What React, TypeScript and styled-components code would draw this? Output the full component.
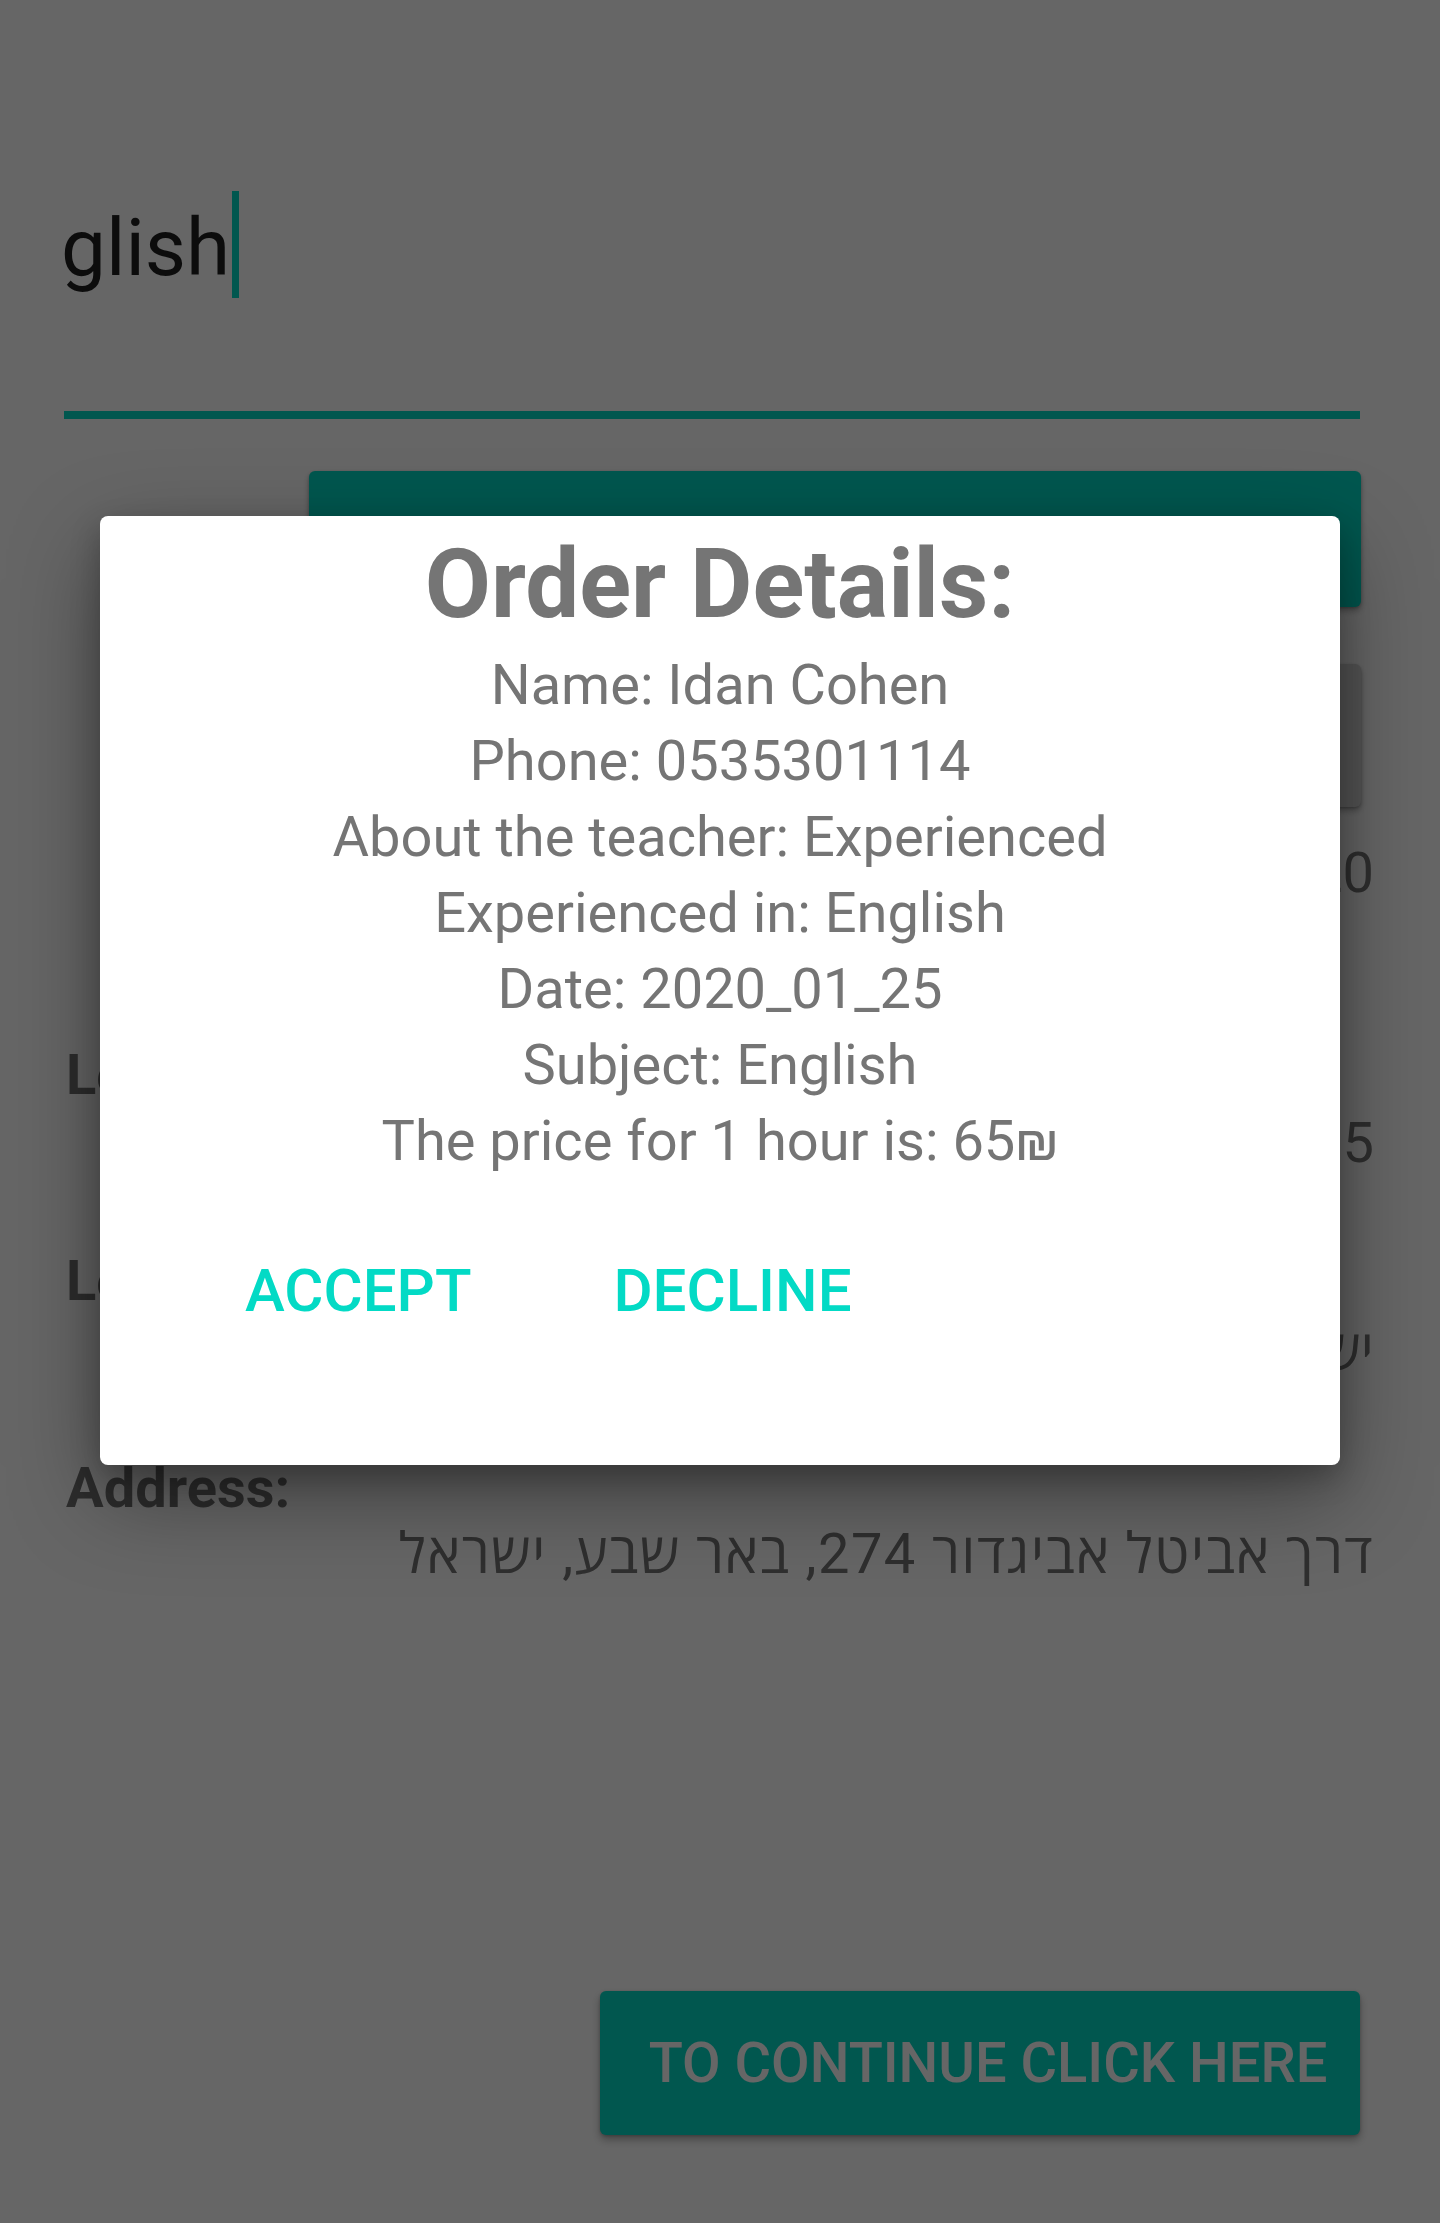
import React from "react";
import styled, { createGlobalStyle } from "styled-components";

const GlobalStyle = createGlobalStyle`
  html, body {
    margin: 0;
    padding: 0;
  }
  body {
    font-family: Roboto, "Open Sans", "DejaVu Sans", sans-serif;
    background: #ffffff;
  }
  * {
    box-sizing: border-box;
  }
`;

const ACCENT = "#03dac5";

const Screen = styled.div`
  position: relative;
  width: 1440px;
  height: 2223px;
  overflow: hidden;
  background: #ffffff;
`;

const Page = styled.div`
  display: flex;
  flex-direction: column;
  padding: 0 80px 0 64px;
`;

const EditField = styled.div`
  margin-top: 191px;
  height: 228px;
  border-bottom: 8px solid ${ACCENT};
  display: flex;
  align-items: flex-start;
`;

const EditText = styled.span`
  font-size: 80px;
  line-height: 103px;
  padding-top: 6px;
  margin-left: -3px;
  color: #1f1f1f;
`;

const Cursor = styled.span`
  width: 7px;
  height: 107px;
  margin-left: 2px;
  background: ${ACCENT};
`;

const RaisedButton = styled.div<{ $tone: "accent" | "plain"; $top: number; $height: number }>`
  margin: ${(p) => p.$top}px -1px 0 245px;
  height: ${(p) => p.$height}px;
  border-radius: 6px;
  background: ${(p) => (p.$tone === "accent" ? ACCENT : "#d6d6d6")};
  box-shadow: 0 4px 6px rgba(0, 0, 0, 0.28), 0 1px 3px rgba(0, 0, 0, 0.2);
`;

const Label = styled.div<{ $top: number }>`
  margin-top: ${(p) => p.$top}px;
  margin-left: 2px;
  font-size: 56px;
  line-height: 68px;
  font-weight: 700;
  color: #727272;
  white-space: nowrap;
`;

const Value = styled.div<{ $top: number; $spacing?: number }>`
  margin-top: ${(p) => p.$top}px;
  margin-right: -14px;
  font-size: 56px;
  line-height: 68px;
  letter-spacing: ${(p) => p.$spacing ?? 0}px;
  color: #757575;
  text-align: right;
  white-space: nowrap;
`;

const ContinueButton = styled.button`
  margin-top: 403px;
  align-self: flex-end;
  width: 760px;
  height: 144px;
  border: none;
  border-radius: 6px;
  padding: 0 0 0 16px;
  background: ${ACCENT};
  color: #ffffff;
  font-family: Roboto, "Open Sans", sans-serif;
  font-size: 56px;
  font-weight: 500;
  letter-spacing: 0;
  display: flex;
  align-items: center;
  justify-content: center;
  box-shadow: 0 5px 8px rgba(0, 0, 0, 0.3), 0 1px 3px rgba(0, 0, 0, 0.2);
`;

const Overlay = styled.div`
  position: absolute;
  inset: 0;
  background: rgba(0, 0, 0, 0.6);
`;

const Dialog = styled.div`
  position: absolute;
  left: 100px;
  top: 516px;
  width: 1240px;
  height: 949px;
  padding-top: 13px;
  border-radius: 8px;
  background: #ffffff;
  display: flex;
  flex-direction: column;
  align-items: center;
  box-shadow: 0 32px 90px rgba(0, 0, 0, 0.38), 0 12px 30px rgba(0, 0, 0, 0.24);
`;

const Title = styled.h2`
  margin: 0;
  font-size: 96px;
  line-height: 110px;
  font-weight: 700;
  color: #757575;
`;

const Details = styled.div`
  margin-top: 8px;
  display: flex;
  flex-direction: column;
  align-items: center;
`;

const DetailLine = styled.div`
  font-size: 56px;
  line-height: 76px;
  color: #757575;
  white-space: nowrap;
`;

const Actions = styled.div`
  align-self: stretch;
  margin-top: 72px;
  padding-left: 145px;
  display: flex;
  gap: 142px;
`;

const ActionButton = styled.button`
  border: none;
  background: none;
  padding: 0;
  font-family: Roboto, "Open Sans", sans-serif;
  font-size: 60px;
  line-height: 80px;
  font-weight: 500;
  color: ${ACCENT};
  cursor: pointer;
`;

const details = [
  "Name: Idan Cohen",
  "Phone: 0535301114",
  "About the teacher: Experienced",
  "Experienced in: English",
  "Date: 2020_01_25",
  "Subject: English",
  "The price for 1 hour is: 65\u20AA",
];

export default function App() {
  return (
    <>
      <GlobalStyle />
      <Screen>
        <Page>
          <EditField>
            <EditText>glish</EditText>
            <Cursor />
          </EditField>
          <RaisedButton $tone="accent" $top={52} $height={136} />
          <RaisedButton $tone="plain" $top={57} $height={143} />
          <Value $top={32}>25/01/2020</Value>
          <Label $top={134}>Longitude:</Label>
          <Value $top={0}>34.7928505</Value>
          <Label $top={70}>Lo:</Label>
          <Value $top={2} dir="rtl">ישראל</Value>
          <Label $top={69}>Address:</Label>
          <Value $top={-2} $spacing={1.4} dir="rtl">
            דרך אביטל אביגדור 274, באר שבע, ישראל
          </Value>
          <ContinueButton>TO CONTINUE CLICK HERE</ContinueButton>
        </Page>
        <Overlay />
        <Dialog role="dialog">
          <Title>Order Details:</Title>
          <Details>
            {details.map((line) => (
              <DetailLine key={line}>{line}</DetailLine>
            ))}
          </Details>
          <Actions>
            <ActionButton>ACCEPT</ActionButton>
            <ActionButton>DECLINE</ActionButton>
          </Actions>
        </Dialog>
      </Screen>
    </>
  );
}
